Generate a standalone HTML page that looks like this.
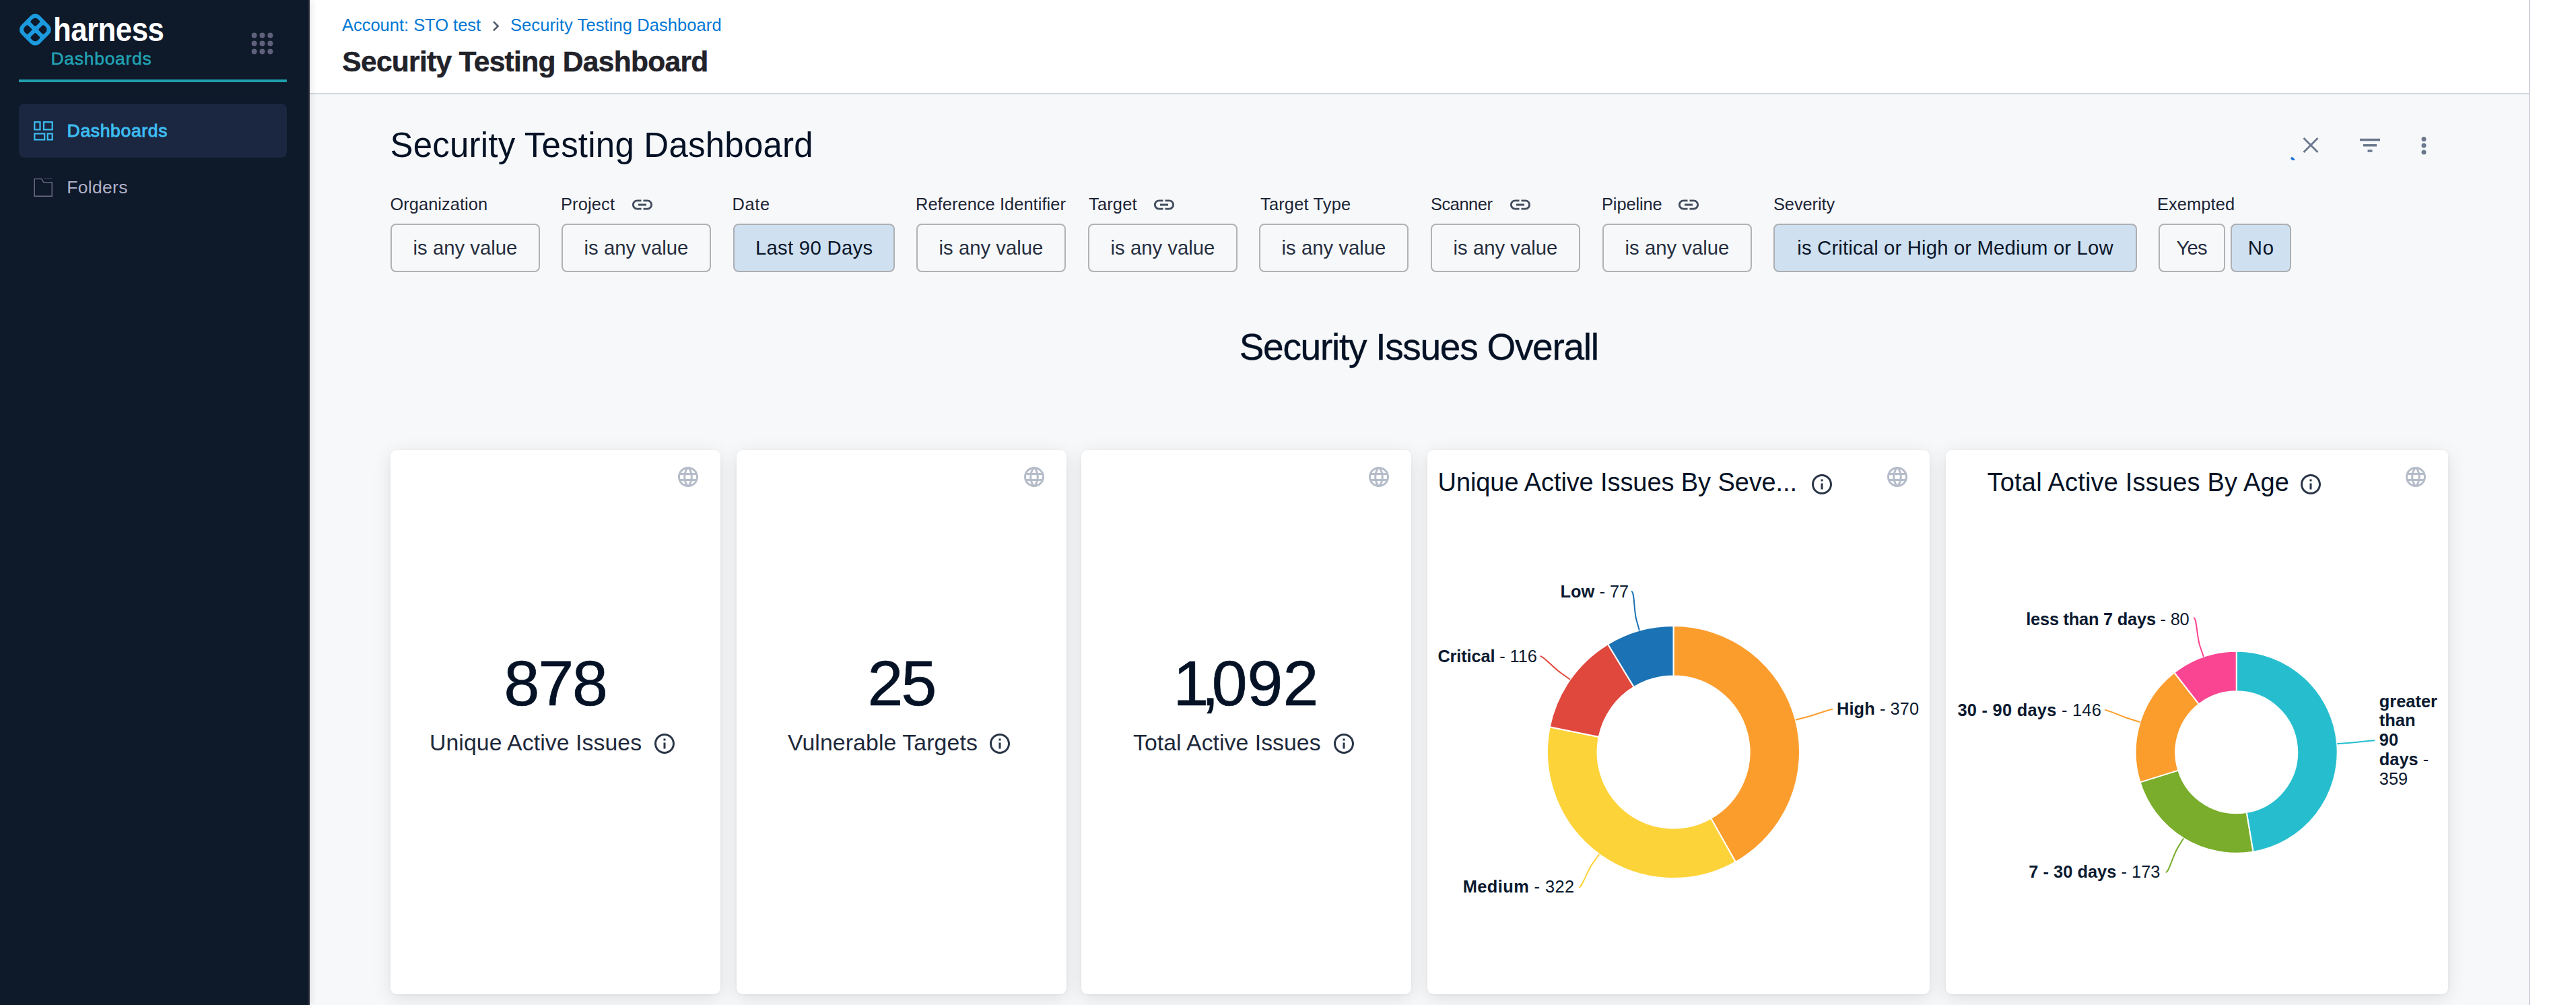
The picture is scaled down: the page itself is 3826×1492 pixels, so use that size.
<!DOCTYPE html>
<html lang="en">
<head>
<meta charset="utf-8">
<title>Security Testing Dashboard</title>
<style>
*{box-sizing:border-box;margin:0;padding:0}
html,body{width:3826px;height:1492px;overflow:hidden;background:#fff}
body{position:relative;font-family:'Liberation Sans',sans-serif;color:#051226}
a{text-decoration:none}
h1,h2,h3,label{font-weight:400}
.t{position:absolute;white-space:nowrap;line-height:1;display:block}
.t b{font-weight:700}
.ic{position:absolute;display:block}
.i-link{fill:#414c5e}.i-globe{fill:#b5bcc9}.i-info{fill:#2a3547}
aside{position:absolute;left:0;top:0;width:460px;height:1492px;background:#0e1929;border-right:2px solid #2b2c3c;z-index:3;box-shadow:2px 0 10px rgba(0,0,0,.11)}
.brandmark{position:absolute;left:28px;top:20px}
.brand-rule{position:absolute;left:28px;top:118px;width:398px;height:4px;background:#209fae}
.grid9{position:absolute;left:373px;top:48px}
.navitem{position:absolute;left:28px;width:398px;height:80px;border-radius:8px;display:block}
.navitem.sel{top:154px;background:#1b2741}
.navitem.n2{top:238px}
header{position:absolute;left:460px;top:0;width:3297px;height:140px;background:#fff;border-bottom:2px solid #d4d5e2;z-index:2}
main{position:absolute;left:460px;top:140px;width:3297px;height:1352px;background:#f7f8fa;overflow:hidden}
.rail{position:absolute;left:3756px;top:0;width:70px;height:1492px;background:#fff;border-left:2px solid #d2d3e0;z-index:4}
.filter{position:absolute;top:140px;height:130px}
.fbtn{position:absolute;top:52px;height:72px;border:2px solid #b1b2b5;border-radius:8px;background:transparent;
 font:400 29.3px/1 'Liberation Sans',sans-serif;color:#262f3f;display:flex;align-items:center;justify-content:center;white-space:nowrap;padding:0 0 1px}
.fbtn.on{background:#cfe0f1;color:#0a1628;border-color:#adafb3}
.card{position:absolute;top:528px;height:808px;background:#fff;border-radius:9px;box-shadow:0 6px 28px rgba(0,0,0,.10),0 1px 4px rgba(0,0,0,.05)}
.chart{position:absolute;left:0;top:0}
</style>
</head>
<body>
<aside>
<div class="brandbox">
<svg class="brandmark" width="48" height="48" viewBox="-24 -24 48 48"><g transform="translate(0.35 0) rotate(45)"><path fill-rule="evenodd" fill="#1b9ade" d="M-9.8 -19.4H9.8A9.6 9.6 0 0 1 19.4 -9.8V9.8A9.6 9.6 0 0 1 9.8 19.4H-9.8A9.6 9.6 0 0 1 -19.4 9.8V-9.8A9.6 9.6 0 0 1 -9.8 -19.4ZM-8.3 -13.8H-5.2A2.2 2.2 0 0 1 -3 -11.6V-5.2A2.2 2.2 0 0 1 -5.2 -3H-11.6A2.2 2.2 0 0 1 -13.8 -5.2V-8.3A5.5 5.5 0 0 1 -8.3 -13.8ZM5.2 -13.8H8.3A5.5 5.5 0 0 1 13.8 -8.3V-5.2A2.2 2.2 0 0 1 11.6 -3H5.2A2.2 2.2 0 0 1 3 -5.2V-11.6A2.2 2.2 0 0 1 5.2 -13.8ZM5.2 3H11.6A2.2 2.2 0 0 1 13.8 5.2V8.3A5.5 5.5 0 0 1 8.3 13.8H5.2A2.2 2.2 0 0 1 3 11.6V5.2A2.2 2.2 0 0 1 5.2 3ZM-11.6 3H-5.2A2.2 2.2 0 0 1 -3 5.2V11.6A2.2 2.2 0 0 1 -5.2 13.8H-8.3A5.5 5.5 0 0 1 -13.8 8.3V5.2A2.2 2.2 0 0 1 -11.6 3Z"/></g></svg>
<span class="t brand" style="left:79.23px;top:19.15px;font-size:49.2px;letter-spacing:-0.6px;transform:scaleX(0.8910);transform-origin:0 50%;font-weight:700;color:#ffffff;">harness</span>
<span class="t module" style="left:75.5px;top:74.27px;font-size:26.5px;letter-spacing:0.71px;color:#22a3b4;-webkit-text-stroke:.5px #22a3b4;">Dashboards</span>
<svg class="grid9" width="33" height="33" viewBox="0 0 32.2 32.2" fill="#5f617c"><circle cx="4.5" cy="4.5" r="3.9"/><circle cx="16.1" cy="4.5" r="3.9"/><circle cx="27.7" cy="4.5" r="3.9"/><circle cx="4.5" cy="16.1" r="3.9"/><circle cx="16.1" cy="16.1" r="3.9"/><circle cx="27.7" cy="16.1" r="3.9"/><circle cx="4.5" cy="27.7" r="3.9"/><circle cx="16.1" cy="27.7" r="3.9"/><circle cx="27.7" cy="27.7" r="3.9"/></svg>
<div class="brand-rule"></div>
</div>
<nav>
<a class="navitem sel" href="#"></a>
<svg class="ic" style="left:49px;top:179px" width="31" height="31" viewBox="0 0 31 31" fill="none" stroke="#3dbdf2" stroke-width="2.2"><rect x="2.3" y="2.2" width="8.2" height="11.2"/><rect x="16" y="2.2" width="12.7" height="11.2"/><rect x="2.3" y="19.4" width="14.9" height="9"/><rect x="21.7" y="19.4" width="7" height="9"/></svg>
<span class="t" style="left:99.6px;top:180.57px;font-size:26.5px;letter-spacing:0.66px;color:#3dbdf2;-webkit-text-stroke:.9px #3dbdf2;">Dashboards</span>
<a class="navitem n2" href="#"></a>
<svg class="ic" style="left:49px;top:263px" width="31" height="31" viewBox="0 0 31 31" fill="none" stroke="#6e7088" stroke-width="1.4"><path d="M2.2 2.6h10.6l3 5h12.4v20.6h-26z"/><path d="M16.5 2.2h11.5" stroke="#4a4d63" stroke-width="1"/></svg>
<span class="t" style="left:99.2px;top:264.57px;font-size:26.5px;letter-spacing:0.31px;color:#b0b2c9;">Folders</span>
</nav>
</aside>
<header>
<nav class="crumbs">
<a class="t" href="#" style="left:48px;top:25.21px;font-size:25.5px;letter-spacing:-0.02px;color:#0278d5;">Account: STO test</a>
<svg class="ic" style="left:270px;top:30px" width="14" height="18" viewBox="0 0 14 18" fill="none" stroke="#4f5a6b" stroke-width="2.6"><path d="M3 2.2l6.6 6.6L3 15.4"/></svg>
<a class="t" href="#" style="left:298px;top:25.21px;font-size:25.5px;letter-spacing:0.09px;color:#0278d5;">Security Testing Dashboard</a>
</nav>
<h1 class="t" style="left:48.3px;top:70.82px;font-size:42.5px;letter-spacing:-0.69px;font-weight:700;color:#22222a;-webkit-text-stroke:.5px #22222a;">Security Testing Dashboard</h1>
</header>
<main>
<h2 class="t" style="left:119.4px;top:49.83px;font-size:51px;letter-spacing:0.22px;color:#051226;">Security Testing Dashboard</h2>
<div class="toolbar"><svg class="ic" style="left:2940px;top:58px" width="230" height="40" viewBox="0 0 230 40" fill="none"><path d="M4.2 36.9l2.2 2.2" stroke="#1b73d8" stroke-width="3.6" stroke-linecap="round"/><path d="M21.5 7l21 21M42.5 7l-21 21" stroke="#6b788d" stroke-width="2.8"/><path d="M105 9.5h30M110 17.8h20M116.5 26h7" stroke="#6b788d" stroke-width="3.4"/><g fill="#6b788d"><circle cx="200" cy="8.5" r="3.5"/><circle cx="200" cy="18" r="3.5"/><circle cx="200" cy="28" r="3.5"/></g></svg></div>
<div class="filters">
<div class="filter" style="left:120px;width:222px"><label class="t" style="left:-0.5px;top:11px;font-size:25.4px;letter-spacing:0.06px;color:#1c2536;">Organization</label><button type="button" class="fbtn" style="left:0px;width:222px;letter-spacing:0.01px"><span style="margin-right:-0.01px">is any value</span></button></div>
<div class="filter" style="left:374px;width:222px"><label class="t" style="left:-1px;top:11px;font-size:25.4px;letter-spacing:0.17px;color:#1c2536;">Project</label><svg class="ic i-link" style="left:102px;top:6px" width="36" height="36" viewBox="0 0 24 24"><path d="M3.9 12c0-1.71 1.39-3.1 3.1-3.1h4V7H7c-2.76 0-5 2.24-5 5s2.24 5 5 5h4v-1.9H7c-1.71 0-3.1-1.39-3.1-3.1zM8 13h8v-2H8v2zm9-6h-4v1.9h4c1.71 0 3.1 1.39 3.1 3.1s-1.39 3.1-3.1 3.1h-4V17h4c2.76 0 5-2.24 5-5s-2.24-5-5-5z"/></svg><button type="button" class="fbtn" style="left:0px;width:222px;letter-spacing:0.01px"><span style="margin-right:-0.01px">is any value</span></button></div>
<div class="filter" style="left:629px;width:240px"><label class="t" style="left:-1.5px;top:11px;font-size:25.4px;letter-spacing:0.66px;color:#1c2536;">Date</label><button type="button" class="fbtn on" style="left:0px;width:240px;letter-spacing:0.29px"><span style="margin-right:-0.29px">Last 90 Days</span></button></div>
<div class="filter" style="left:901px;width:222px"><label class="t" style="left:-1px;top:11px;font-size:25.4px;letter-spacing:0.07px;color:#1c2536;">Reference Identifier</label><button type="button" class="fbtn" style="left:0px;width:222px;letter-spacing:0.01px"><span style="margin-right:-0.01px">is any value</span></button></div>
<div class="filter" style="left:1156px;width:222px"><label class="t" style="left:1px;top:11px;font-size:25.4px;letter-spacing:0.2px;color:#1c2536;">Target</label><svg class="ic i-link" style="left:95px;top:6px" width="36" height="36" viewBox="0 0 24 24"><path d="M3.9 12c0-1.71 1.39-3.1 3.1-3.1h4V7H7c-2.76 0-5 2.24-5 5s2.24 5 5 5h4v-1.9H7c-1.71 0-3.1-1.39-3.1-3.1zM8 13h8v-2H8v2zm9-6h-4v1.9h4c1.71 0 3.1 1.39 3.1 3.1s-1.39 3.1-3.1 3.1h-4V17h4c2.76 0 5-2.24 5-5s-2.24-5-5-5z"/></svg><button type="button" class="fbtn" style="left:0px;width:222px;letter-spacing:0.01px"><span style="margin-right:-0.01px">is any value</span></button></div>
<div class="filter" style="left:1410px;width:222px"><label class="t" style="left:2px;top:11px;font-size:25.4px;letter-spacing:0.2px;color:#1c2536;">Target Type</label><button type="button" class="fbtn" style="left:0px;width:222px;letter-spacing:0.01px"><span style="margin-right:-0.01px">is any value</span></button></div>
<div class="filter" style="left:1665px;width:222px"><label class="t" style="left:0px;top:11px;font-size:25.4px;letter-spacing:-0.44px;color:#1c2536;">Scanner</label><svg class="ic i-link" style="left:115px;top:6px" width="36" height="36" viewBox="0 0 24 24"><path d="M3.9 12c0-1.71 1.39-3.1 3.1-3.1h4V7H7c-2.76 0-5 2.24-5 5s2.24 5 5 5h4v-1.9H7c-1.71 0-3.1-1.39-3.1-3.1zM8 13h8v-2H8v2zm9-6h-4v1.9h4c1.71 0 3.1 1.39 3.1 3.1s-1.39 3.1-3.1 3.1h-4V17h4c2.76 0 5-2.24 5-5s-2.24-5-5-5z"/></svg><button type="button" class="fbtn" style="left:0px;width:222px;letter-spacing:0.01px"><span style="margin-right:-0.01px">is any value</span></button></div>
<div class="filter" style="left:1920px;width:222px"><label class="t" style="left:-1px;top:11px;font-size:25.4px;letter-spacing:-0.1px;color:#1c2536;">Pipeline</label><svg class="ic i-link" style="left:110px;top:6px" width="36" height="36" viewBox="0 0 24 24"><path d="M3.9 12c0-1.71 1.39-3.1 3.1-3.1h4V7H7c-2.76 0-5 2.24-5 5s2.24 5 5 5h4v-1.9H7c-1.71 0-3.1-1.39-3.1-3.1zM8 13h8v-2H8v2zm9-6h-4v1.9h4c1.71 0 3.1 1.39 3.1 3.1s-1.39 3.1-3.1 3.1h-4V17h4c2.76 0 5-2.24 5-5s-2.24-5-5-5z"/></svg><button type="button" class="fbtn" style="left:0px;width:222px;letter-spacing:0.01px"><span style="margin-right:-0.01px">is any value</span></button></div>
<div class="filter" style="left:2174px;width:540px"><label class="t" style="left:0px;top:11px;font-size:25.4px;letter-spacing:-0.07px;color:#1c2536;">Severity</label><button type="button" class="fbtn on" style="left:0px;width:540px;letter-spacing:0.15px"><span style="margin-right:-0.15px">is Critical or High or Medium or Low</span></button></div>
<div class="filter" style="left:2746px;width:197px"><label class="t" style="left:-2px;top:11px;font-size:25.4px;letter-spacing:0.11px;color:#1c2536;">Exempted</label><button type="button" class="fbtn" style="left:0px;width:99px;letter-spacing:-0.82px"><span style="margin-right:0.82px">Yes</span></button><button type="button" class="fbtn on" style="left:107px;width:90px;letter-spacing:0.84px"><span style="margin-right:-0.84px">No</span></button></div>
</div>
<h2 class="t" style="left:1380.7px;top:347.74px;font-size:55px;letter-spacing:-1.28px;color:#051226;-webkit-text-stroke:.4px #051226;">Security Issues Overall</h2>
<section class="card" style="left:120px;width:490px">
<svg class="ic i-globe" style="left:424px;top:22px" width="36" height="36" viewBox="0 0 24 24"><path d="M11.99 2C6.47 2 2 6.48 2 12s4.47 10 9.99 10C17.52 22 22 17.52 22 12S17.52 2 11.99 2zm6.93 6h-2.95c-.32-1.25-.78-2.45-1.38-3.56 1.84.63 3.37 1.91 4.33 3.56zM12 4.04c.83 1.2 1.48 2.53 1.91 3.96h-3.82c.43-1.43 1.08-2.76 1.91-3.96zM4.26 14C4.1 13.36 4 12.69 4 12s.1-1.36.26-2h3.38c-.08.66-.14 1.32-.14 2 0 .68.06 1.34.14 2H4.26zm.82 2h2.95c.32 1.25.78 2.45 1.38 3.56-1.84-.63-3.37-1.9-4.33-3.56zm2.95-8H5.08c.96-1.66 2.49-2.93 4.33-3.56C8.81 5.55 8.35 6.75 8.03 8zM12 19.96c-.83-1.2-1.48-2.53-1.91-3.96h3.82c-.43 1.43-1.08 2.76-1.91 3.96zM14.34 14H9.66c-.09-.66-.16-1.32-.16-2 0-.68.07-1.35.16-2h4.68c.09.65.16 1.32.16 2 0 .68-.07 1.34-.16 2zm.25 5.56c.6-1.11 1.06-2.31 1.38-3.56h2.95c-.96 1.65-2.49 2.93-4.33 3.56zM16.36 14c.08-.66.14-1.32.14-2 0-.68-.06-1.34-.14-2h3.38c.16.64.26 1.31.26 2s-.1 1.36-.26 2h-3.38z"/></svg>
<span class="t kpi" style="left:168.5px;top:298.58px;font-size:95px;letter-spacing:-2.08px;color:#051226;-webkit-text-stroke:.7px #051226;">878</span>
<span class="t" style="left:58px;top:418.39px;font-size:33.8px;letter-spacing:0.07px;color:#1e293b;">Unique Active Issues</span>
<svg class="ic i-info" style="left:389px;top:418px" width="36" height="36" viewBox="0 0 24 24"><path d="M11 7h2v2h-2zm0 4h2v6h-2zm1-9C6.48 2 2 6.48 2 12s4.48 10 10 10 10-4.48 10-10S17.52 2 12 2zm0 18c-4.41 0-8-3.59-8-8s3.59-8 8-8 8 3.59 8 8-3.59 8-8 8z"/></svg>
</section>
<section class="card" style="left:634px;width:490px">
<svg class="ic i-globe" style="left:424px;top:22px" width="36" height="36" viewBox="0 0 24 24"><path d="M11.99 2C6.47 2 2 6.48 2 12s4.47 10 9.99 10C17.52 22 22 17.52 22 12S17.52 2 11.99 2zm6.93 6h-2.95c-.32-1.25-.78-2.45-1.38-3.56 1.84.63 3.37 1.91 4.33 3.56zM12 4.04c.83 1.2 1.48 2.53 1.91 3.96h-3.82c.43-1.43 1.08-2.76 1.91-3.96zM4.26 14C4.1 13.36 4 12.69 4 12s.1-1.36.26-2h3.38c-.08.66-.14 1.32-.14 2 0 .68.06 1.34.14 2H4.26zm.82 2h2.95c.32 1.25.78 2.45 1.38 3.56-1.84-.63-3.37-1.9-4.33-3.56zm2.95-8H5.08c.96-1.66 2.49-2.93 4.33-3.56C8.81 5.55 8.35 6.75 8.03 8zM12 19.96c-.83-1.2-1.48-2.53-1.91-3.96h3.82c-.43 1.43-1.08 2.76-1.91 3.96zM14.34 14H9.66c-.09-.66-.16-1.32-.16-2 0-.68.07-1.35.16-2h4.68c.09.65.16 1.32.16 2 0 .68-.07 1.34-.16 2zm.25 5.56c.6-1.11 1.06-2.31 1.38-3.56h2.95c-.96 1.65-2.49 2.93-4.33 3.56zM16.36 14c.08-.66.14-1.32.14-2 0-.68-.06-1.34-.14-2h3.38c.16.64.26 1.31.26 2s-.1 1.36-.26 2h-3.38z"/></svg>
<span class="t kpi" style="left:194.5px;top:298.58px;font-size:95px;letter-spacing:-2.83px;color:#051226;-webkit-text-stroke:.7px #051226;">25</span>
<span class="t" style="left:76px;top:418.39px;font-size:33.8px;letter-spacing:0.11px;color:#1e293b;">Vulnerable Targets</span>
<svg class="ic i-info" style="left:373px;top:418px" width="36" height="36" viewBox="0 0 24 24"><path d="M11 7h2v2h-2zm0 4h2v6h-2zm1-9C6.48 2 2 6.48 2 12s4.48 10 10 10 10-4.48 10-10S17.52 2 12 2zm0 18c-4.41 0-8-3.59-8-8s3.59-8 8-8 8 3.59 8 8-3.59 8-8 8z"/></svg>
</section>
<section class="card" style="left:1146px;width:490px">
<svg class="ic i-globe" style="left:424px;top:22px" width="36" height="36" viewBox="0 0 24 24"><path d="M11.99 2C6.47 2 2 6.48 2 12s4.47 10 9.99 10C17.52 22 22 17.52 22 12S17.52 2 11.99 2zm6.93 6h-2.95c-.32-1.25-.78-2.45-1.38-3.56 1.84.63 3.37 1.91 4.33 3.56zM12 4.04c.83 1.2 1.48 2.53 1.91 3.96h-3.82c.43-1.43 1.08-2.76 1.91-3.96zM4.26 14C4.1 13.36 4 12.69 4 12s.1-1.36.26-2h3.38c-.08.66-.14 1.32-.14 2 0 .68.06 1.34.14 2H4.26zm.82 2h2.95c.32 1.25.78 2.45 1.38 3.56-1.84-.63-3.37-1.9-4.33-3.56zm2.95-8H5.08c.96-1.66 2.49-2.93 4.33-3.56C8.81 5.55 8.35 6.75 8.03 8zM12 19.96c-.83-1.2-1.48-2.53-1.91-3.96h3.82c-.43 1.43-1.08 2.76-1.91 3.96zM14.34 14H9.66c-.09-.66-.16-1.32-.16-2 0-.68.07-1.35.16-2h4.68c.09.65.16 1.32.16 2 0 .68-.07 1.34-.16 2zm.25 5.56c.6-1.11 1.06-2.31 1.38-3.56h2.95c-.96 1.65-2.49 2.93-4.33 3.56zM16.36 14c.08-.66.14-1.32.14-2 0-.68-.06-1.34-.14-2h3.38c.16.64.26 1.31.26 2s-.1 1.36-.26 2h-3.38z"/></svg>
<span class="t kpi" style="left:136.5px;top:298.58px;font-size:95px;color:#051226;-webkit-text-stroke:.7px #051226;"><span style="letter-spacing:-11px">1,</span>092</span>
<span class="t" style="left:77px;top:418.39px;font-size:33.8px;letter-spacing:0.03px;color:#1e293b;">Total Active Issues</span>
<svg class="ic i-info" style="left:372px;top:418px" width="36" height="36" viewBox="0 0 24 24"><path d="M11 7h2v2h-2zm0 4h2v6h-2zm1-9C6.48 2 2 6.48 2 12s4.48 10 10 10 10-4.48 10-10S17.52 2 12 2zm0 18c-4.41 0-8-3.59-8-8s3.59-8 8-8 8 3.59 8 8-3.59 8-8 8z"/></svg>
</section>
<section class="card" style="left:1660px;width:746px">
<svg class="ic i-globe" style="left:680px;top:22px" width="36" height="36" viewBox="0 0 24 24"><path d="M11.99 2C6.47 2 2 6.48 2 12s4.47 10 9.99 10C17.52 22 22 17.52 22 12S17.52 2 11.99 2zm6.93 6h-2.95c-.32-1.25-.78-2.45-1.38-3.56 1.84.63 3.37 1.91 4.33 3.56zM12 4.04c.83 1.2 1.48 2.53 1.91 3.96h-3.82c.43-1.43 1.08-2.76 1.91-3.96zM4.26 14C4.1 13.36 4 12.69 4 12s.1-1.36.26-2h3.38c-.08.66-.14 1.32-.14 2 0 .68.06 1.34.14 2H4.26zm.82 2h2.95c.32 1.25.78 2.45 1.38 3.56-1.84-.63-3.37-1.9-4.33-3.56zm2.95-8H5.08c.96-1.66 2.49-2.93 4.33-3.56C8.81 5.55 8.35 6.75 8.03 8zM12 19.96c-.83-1.2-1.48-2.53-1.91-3.96h3.82c-.43 1.43-1.08 2.76-1.91 3.96zM14.34 14H9.66c-.09-.66-.16-1.32-.16-2 0-.68.07-1.35.16-2h4.68c.09.65.16 1.32.16 2 0 .68-.07 1.34-.16 2zm.25 5.56c.6-1.11 1.06-2.31 1.38-3.56h2.95c-.96 1.65-2.49 2.93-4.33 3.56zM16.36 14c.08-.66.14-1.32.14-2 0-.68-.06-1.34-.14-2h3.38c.16.64.26 1.31.26 2s-.1 1.36-.26 2h-3.38z"/></svg>
<h3 class="t" style="left:15.6px;top:28.83px;font-size:38px;letter-spacing:-0.1px;color:#051226;">Unique Active Issues By Seve...</h3>
<svg class="ic i-info" style="left:568px;top:33px" width="36" height="36" viewBox="0 0 24 24"><path d="M11 7h2v2h-2zm0 4h2v6h-2zm1-9C6.48 2 2 6.48 2 12s4.48 10 10 10 10-4.48 10-10S17.52 2 12 2zm0 18c-4.41 0-8-3.59-8-8s3.59-8 8-8 8 3.59 8 8-3.59 8-8 8z"/></svg>
<svg class="chart" width="746" height="808" viewBox="0 0 746 808"><g stroke="#fff" stroke-width="2" stroke-linejoin="round"><path d="M365.5 261A187.5 187.5 0 0 1 457.81 611.71L421.13 546.86A113 113 0 0 0 365.5 335.5Z" fill="#fb9d2d"/><path d="M457.81 611.71A187.5 187.5 0 0 1 181.76 411.15L254.77 425.99A113 113 0 0 0 421.13 546.86Z" fill="#fdd33a"/><path d="M181.76 411.15A187.5 187.5 0 0 1 268.03 288.33L306.76 351.97A113 113 0 0 0 254.77 425.99Z" fill="#e0483d"/><path d="M268.03 288.33A187.5 187.5 0 0 1 365.5 261L365.5 335.5A113 113 0 0 0 306.76 351.97Z" fill="#1b72b4"/></g><g fill="none" stroke-width="2"><path d="M602 385C597 385 577.77 392.63 562.3 396.7L546.82 400.78" stroke="#fb9d2d"/><path d="M225 649.5C230 649.5 236.48 626.08 245.89 613.13L255.29 600.19" stroke="#fdd33a"/><path d="M167.5 306C172.5 306 185.88 322.33 198.98 331.53L212.07 340.73" stroke="#e0483d"/><path d="M303 210C308 210 306.25 237.15 310.57 252.55L314.89 267.96" stroke="#1b72b4"/></g></svg>
<span class="t" style="left:608px;top:372px;font-size:25.4px;letter-spacing:0.09px;color:#0b1a30;"><b>High</b> - 370</span>
<span class="t" style="left:52.7px;top:636px;font-size:25.4px;letter-spacing:0.42px;color:#0b1a30;"><b>Medium</b> - 322</span>
<span class="t" style="left:15.4px;top:294px;font-size:25.4px;letter-spacing:-0.13px;color:#0b1a30;"><b>Critical</b> - 116</span>
<span class="t" style="left:197.5px;top:198px;font-size:25.4px;letter-spacing:0.01px;color:#0b1a30;"><b>Low</b> - 77</span>
</section>
<section class="card" style="left:2430px;width:746px">
<svg class="ic i-globe" style="left:680px;top:22px" width="36" height="36" viewBox="0 0 24 24"><path d="M11.99 2C6.47 2 2 6.48 2 12s4.47 10 9.99 10C17.52 22 22 17.52 22 12S17.52 2 11.99 2zm6.93 6h-2.95c-.32-1.25-.78-2.45-1.38-3.56 1.84.63 3.37 1.91 4.33 3.56zM12 4.04c.83 1.2 1.48 2.53 1.91 3.96h-3.82c.43-1.43 1.08-2.76 1.91-3.96zM4.26 14C4.1 13.36 4 12.69 4 12s.1-1.36.26-2h3.38c-.08.66-.14 1.32-.14 2 0 .68.06 1.34.14 2H4.26zm.82 2h2.95c.32 1.25.78 2.45 1.38 3.56-1.84-.63-3.37-1.9-4.33-3.56zm2.95-8H5.08c.96-1.66 2.49-2.93 4.33-3.56C8.81 5.55 8.35 6.75 8.03 8zM12 19.96c-.83-1.2-1.48-2.53-1.91-3.96h3.82c-.43 1.43-1.08 2.76-1.91 3.96zM14.34 14H9.66c-.09-.66-.16-1.32-.16-2 0-.68.07-1.35.16-2h4.68c.09.65.16 1.32.16 2 0 .68-.07 1.34-.16 2zm.25 5.56c.6-1.11 1.06-2.31 1.38-3.56h2.95c-.96 1.65-2.49 2.93-4.33 3.56zM16.36 14c.08-.66.14-1.32.14-2 0-.68-.06-1.34-.14-2h3.38c.16.64.26 1.31.26 2s-.1 1.36-.26 2h-3.38z"/></svg>
<h3 class="t" style="left:61.6px;top:29.13px;font-size:38px;letter-spacing:0.19px;color:#051226;">Total Active Issues By Age</h3>
<svg class="ic i-info" style="left:524px;top:33px" width="36" height="36" viewBox="0 0 24 24"><path d="M11 7h2v2h-2zm0 4h2v6h-2zm1-9C6.48 2 2 6.48 2 12s4.48 10 10 10 10-4.48 10-10S17.52 2 12 2zm0 18c-4.41 0-8-3.59-8-8s3.59-8 8-8 8 3.59 8 8-3.59 8-8 8z"/></svg>
<svg class="chart" width="746" height="808" viewBox="0 0 746 808"><g stroke="#fff" stroke-width="2" stroke-linejoin="round"><path d="M431.7 298.7A150 150 0 0 1 456.45 596.64L446.63 537.96A90.5 90.5 0 0 0 431.7 358.2Z" fill="#26bece"/><path d="M456.45 596.64A150 150 0 0 1 288.51 493.39L345.31 475.67A90.5 90.5 0 0 0 446.63 537.96Z" fill="#79ad2b"/><path d="M288.51 493.39A150 150 0 0 1 339.36 330.49L375.99 377.38A90.5 90.5 0 0 0 345.31 475.67Z" fill="#fb9d2d"/><path d="M339.36 330.49A150 150 0 0 1 431.7 298.7L431.7 358.2A90.5 90.5 0 0 0 375.99 377.38Z" fill="#fa4592"/></g><g fill="none" stroke-width="2"><path d="M637 431.3C632 431.3 613.08 433.63 597.13 434.96L581.18 436.28" stroke="#26bece"/><path d="M326.7 627C331.7 627 336.38 603.74 344.76 590.11L353.14 576.48" stroke="#79ad2b"/><path d="M236.2 386C241.2 386 257.97 394.47 273.24 399.24L288.51 404.01" stroke="#fb9d2d"/><path d="M368 249C373 249 372.45 276.61 377.66 291.74L382.87 306.87" stroke="#fa4592"/></g></svg>
<span class="t" style="left:643.8px;top:358.6px;font-size:25.4px;color:#0b1a30;line-height:28.85px;white-space:normal;"><b>greater<br>than<br>90<br>days</b> -<br>359</span>
<span class="t" style="left:123.3px;top:613.9px;font-size:25.4px;letter-spacing:0.02px;color:#0b1a30;"><b>7 - 30 days</b> - 173</span>
<span class="t" style="left:17.4px;top:373.7px;font-size:25.4px;letter-spacing:0.27px;color:#0b1a30;"><b>30 - 90 days</b> - 146</span>
<span class="t" style="left:119.3px;top:238.5px;font-size:25.4px;letter-spacing:-0.23px;color:#0b1a30;"><b>less than 7 days</b> - 80</span>
</section>
</main>
<div class="rail"></div>
</body>
</html>
